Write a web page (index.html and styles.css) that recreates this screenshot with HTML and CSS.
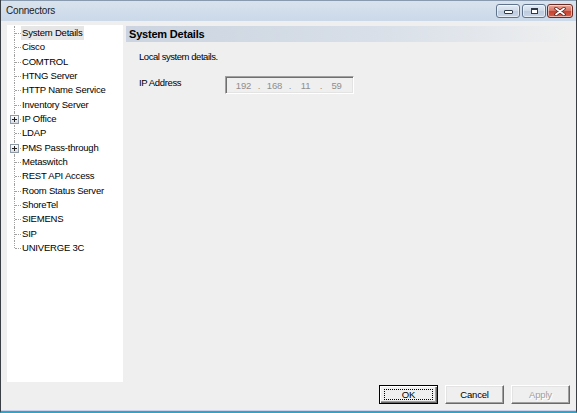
FILE: index.html
```html
<!DOCTYPE html>
<html>
<head>
<meta charset="utf-8">
<title>Connectors</title>
<link rel="stylesheet" href="styles.css">
</head>
<body>
<div class="window">
  <div class="titlebar">
    <span class="title">Connectors</span>
    <div class="caption-buttons">
      <div class="cbtn cbtn-min"><span class="glyph-min"></span></div>
      <div class="cbtn cbtn-max"><span class="glyph-max"></span></div>
      <div class="cbtn cbtn-close">
        <svg width="12" height="9" viewBox="0 0 12 9">
          <path d="M2 1.5 L10 7.5 M10 1.5 L2 7.5" stroke="#5a1c16" stroke-width="3.4" stroke-linecap="round" fill="none"/>
          <path d="M2 1.5 L10 7.5 M10 1.5 L2 7.5" stroke="#ffffff" stroke-width="1.8" stroke-linecap="round" fill="none"/>
        </svg>
      </div>
    </div>
  </div>
  <div class="client">
    <div class="main">
      <ul class="tree">
        <li class="node"><span class="label selected">System Details</span></li>
        <li class="node"><span class="label">Cisco</span></li>
        <li class="node"><span class="label">COMTROL</span></li>
        <li class="node"><span class="label">HTNG Server</span></li>
        <li class="node"><span class="label">HTTP Name Service</span></li>
        <li class="node"><span class="label">Inventory Server</span></li>
        <li class="node"><span class="expander"></span><span class="label">IP Office</span></li>
        <li class="node"><span class="label">LDAP</span></li>
        <li class="node"><span class="expander"></span><span class="label">PMS Pass-through</span></li>
        <li class="node"><span class="label">Metaswitch</span></li>
        <li class="node"><span class="label">REST API Access</span></li>
        <li class="node"><span class="label">Room Status Server</span></li>
        <li class="node"><span class="label">ShoreTel</span></li>
        <li class="node"><span class="label">SIEMENS</span></li>
        <li class="node"><span class="label">SIP</span></li>
        <li class="node"><span class="label">UNIVERGE 3C</span></li>
      </ul>
      <div class="panel">
        <div class="panel-header">System Details</div>
        <div class="panel-body">
          <p class="desc">Local system details.</p>
          <div class="field">
            <span class="field-label">IP Address</span>
            <div class="ipbox">
              <span class="octet">192</span><span class="dot">.</span>
              <span class="octet">168</span><span class="dot">.</span>
              <span class="octet">11</span><span class="dot">.</span>
              <span class="octet">59</span>
            </div>
          </div>
        </div>
      </div>
    </div>
    <div class="footer">
      <div class="btn btn-default"><span class="focus">OK</span></div>
      <div class="btn">Cancel</div>
      <div class="btn btn-disabled">Apply</div>
    </div>
  </div>
</div>
</body>
</html>
```
FILE: styles.css
```css
* {
  box-sizing: border-box;
  margin: 0;
  padding: 0;
}

html, body {
  width: 577px;
  height: 413px;
  overflow: hidden;
}

body {
  font-family: "Liberation Sans", Arial, sans-serif;
  font-size: 9.5px;
  letter-spacing: -0.2px;
  color: #000;
  background: #efefef;
}

.window {
  width: 577px;
  height: 413px;
  display: flex;
  flex-direction: column;
  border-left: 1px solid #3a3f45;
  border-right: 1px solid #3a3f45;
  border-bottom: 2px solid #2ea6c6;
}

/* Title bar */
.titlebar {
  height: 21px;
  display: flex;
  align-items: flex-start;
  background: linear-gradient(#d9e3ee, #cad8e8);
  border-top: 1px solid #8a9aae;
}

.title {
  padding: 3px 0 0 5px;
  font-size: 10px;
  letter-spacing: -0.2px;
  line-height: 14px;
  color: #1b1b1b;
}

.caption-buttons {
  margin-left: auto;
  margin-top: 3px;
  padding-right: 3px;
  display: flex;
}

.cbtn {
  height: 14px;
  border: 1px solid #60738d;
  border-radius: 3px;
  display: flex;
  align-items: center;
  justify-content: center;
  box-shadow: inset 0 0 0 1px rgba(255, 255, 255, 0.55);
}

.cbtn-min,
.cbtn-max {
  width: 24px;
  background: linear-gradient(#e4ecf5, #cdd9e8 50%, #bccbdf 51%, #c9d6e7);
}

.cbtn-min {
  margin-right: 2px;
  align-items: flex-end;
  padding-bottom: 3px;
}

.cbtn-max {
  margin-right: 1px;
}

.cbtn-close {
  width: 26px;
  border-color: #6d2a22;
  background: linear-gradient(#e9a89b, #d7705f 50%, #c5412f 51%, #d2604c);
}

.glyph-min {
  width: 9px;
  height: 4px;
  border: 1px solid #2f3a48;
  border-radius: 1px;
  background: #fff;
}

.glyph-max {
  width: 7px;
  height: 6px;
  border: 1px solid #2f3a48;
  border-top-width: 2px;
  background: #fff;
}

/* Client area */
.client {
  flex: 1;
  display: flex;
  flex-direction: column;
  background: #efefef;
  border-bottom: 1px solid #c9d2ea;
}

.main {
  display: flex;
  gap: 3px;
  padding: 4px 4px 0 6px;
}

.tree {
  width: 116px;
  height: 357px;
  flex: none;
  background: #fff;
  list-style: none;
  padding-top: 1px;
}

.node {
  position: relative;
  height: 14.333px;
  line-height: 14.333px;
  padding-left: 14px;
  white-space: nowrap;
}

.node::before {
  content: "";
  position: absolute;
  left: 7px;
  top: 0;
  height: 100%;
  border-left: 1px dotted #a0a0a0;
}

.node:last-child::before {
  height: 50%;
}

.node::after {
  content: "";
  position: absolute;
  left: 8px;
  top: 7px;
  width: 6px;
  border-top: 1px dotted #a0a0a0;
}

.label {
  display: inline-block;
  padding: 0 1px;
}

.label.selected {
  background: #e6e6e6;
}

.expander {
  position: absolute;
  left: 3px;
  top: 3px;
  width: 9px;
  height: 9px;
  border: 1px solid #8e9aa8;
  background: linear-gradient(#ffffff, #d9dde3);
  z-index: 1;
}

.expander::before {
  content: "";
  position: absolute;
  left: 1px;
  top: 3px;
  width: 5px;
  height: 1px;
  background: #1f1f1f;
}

.expander::after {
  content: "";
  position: absolute;
  left: 3px;
  top: 1px;
  width: 1px;
  height: 5px;
  background: #1f1f1f;
}

/* Right panel */
.panel {
  flex: 1;
  margin-top: 1px;
}

.panel-header {
  height: 16px;
  line-height: 16px;
  padding-left: 3px;
  font-size: 11px;
  font-weight: bold;
  letter-spacing: -0.2px;
  background: linear-gradient(to right, #cbd4e0, #d8dfe8 55%, #e6e9ed 85%, #efefef);
}

.panel-body {
  padding: 8px 0 0 13px;
}

.desc {
  line-height: 14px;
  letter-spacing: -0.45px;
}

.field {
  display: flex;
  align-items: flex-start;
  margin-top: 12px;
}

.field-label {
  width: 86px;
  line-height: 14px;
  letter-spacing: -0.35px;
}

.ipbox {
  width: 129px;
  height: 18px;
  display: flex;
  align-items: center;
  padding-left: 7px;
  border: 1px solid;
  border-color: #a0a0a0 #ffffff #ffffff #a0a0a0;
  box-shadow: inset 1px 1px 0 #6f6f6f, inset -1px -1px 0 #e3e3e3;
  background: #efefef;
  color: #8e8e8e;
}

.octet {
  width: 21px;
  text-align: center;
}

.dot {
  width: 10px;
  text-align: center;
}

/* Footer buttons */
.footer {
  display: flex;
  justify-content: flex-end;
  gap: 7px;
  padding: 3px 6px 6px 0;
}

.btn {
  width: 59px;
  height: 19px;
  display: flex;
  align-items: center;
  justify-content: center;
  border: 1px solid;
  border-color: #ffffff #696969 #696969 #ffffff;
  box-shadow: inset -1px -1px 0 #a0a0a0, inset 1px 1px 0 #e3e3e3;
  background: #efefef;
}

.btn-default {
  border: 1px solid #000;
  box-shadow: inset 1px 1px 0 #fff, inset -1px -1px 0 #696969, inset -2px -2px 0 #a0a0a0;
}

.focus {
  width: 49px;
  height: 11px;
  line-height: 10px;
  text-align: center;
  border: 1px dotted #000;
}

.btn-disabled {
  color: #a0a0a0;
  text-shadow: 1px 1px 0 #fff;
}
```
